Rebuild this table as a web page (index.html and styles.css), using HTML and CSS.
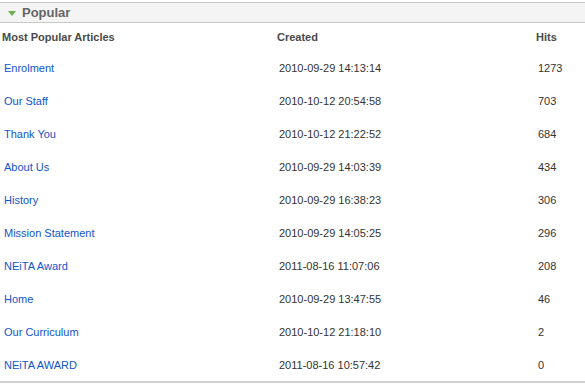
FILE: index.html
```html
<!DOCTYPE html>
<html>
<head>
<meta charset="utf-8">
<link rel="stylesheet" href="styles.css">
</head>
<body>
<div class="panel">
  <h3 class="panel-title"><span class="arrow"></span>Popular</h3>
  <table class="popular">
    <thead>
      <tr><th class="c-title">Most Popular Articles</th><th class="c-created">Created</th><th class="c-hits">Hits</th></tr>
    </thead>
    <tbody>
      <tr><td class="c-title"><a href="#">Enrolment</a></td><td class="c-created">2010-09-29 14:13:14</td><td class="c-hits">1273</td></tr>
      <tr><td class="c-title"><a href="#">Our Staff</a></td><td class="c-created">2010-10-12 20:54:58</td><td class="c-hits">703</td></tr>
      <tr><td class="c-title"><a href="#">Thank You</a></td><td class="c-created">2010-10-12 21:22:52</td><td class="c-hits">684</td></tr>
      <tr><td class="c-title"><a href="#">About Us</a></td><td class="c-created">2010-09-29 14:03:39</td><td class="c-hits">434</td></tr>
      <tr><td class="c-title"><a href="#">History</a></td><td class="c-created">2010-09-29 16:38:23</td><td class="c-hits">306</td></tr>
      <tr><td class="c-title"><a href="#">Mission Statement</a></td><td class="c-created">2010-09-29 14:05:25</td><td class="c-hits">296</td></tr>
      <tr><td class="c-title"><a href="#">NEiTA Award</a></td><td class="c-created">2011-08-16 11:07:06</td><td class="c-hits">208</td></tr>
      <tr><td class="c-title"><a href="#">Home</a></td><td class="c-created">2010-09-29 13:47:55</td><td class="c-hits">46</td></tr>
      <tr><td class="c-title"><a href="#">Our Curriculum</a></td><td class="c-created">2010-10-12 21:18:10</td><td class="c-hits">2</td></tr>
      <tr><td class="c-title"><a href="#">NEiTA AWARD</a></td><td class="c-created">2011-08-16 10:57:42</td><td class="c-hits">0</td></tr>
    </tbody>
  </table>
</div>
</body>
</html>
```
FILE: styles.css
```css
html, body {
  margin: 0;
  padding: 0;
  background: #fff;
}
body {
  font-family: "Liberation Sans", Arial, sans-serif;
  font-size: 11px;
  color: #333;
}
.panel {
  padding-top: 2px;
  border-bottom: 2px solid #d0d0d0;
}
.panel-title {
  margin: 0;
  height: 19px;
  display: flex;
  align-items: center;
  background: #f4f4f4;
  border-top: 1px solid #c8c8c8;
  border-bottom: 1px solid #c8c8c8;
  font-size: 13px;
  font-weight: bold;
  color: #666;
  padding-left: 8px;
}
.arrow {
  width: 0;
  height: 0;
  border-left: 4px solid transparent;
  border-right: 4px solid transparent;
  border-top: 5px solid #6ab04c;
  margin-right: 6px;
  margin-top: 2px;
}
.popular {
  width: 100%;
  border-collapse: collapse;
}
.popular th {
  height: 28px;
  padding: 0 2px;
  text-align: left;
  font-weight: bold;
  color: #4a4a4a;
  vertical-align: middle;
}
.popular td {
  height: 33px;
  padding: 0 4px;
  vertical-align: middle;
  color: #333;
}
.popular .c-title { width: 267px; }
.popular .c-created { width: 251px; }
.popular a {
  color: #1155cc;
  text-decoration: none;
}
```
